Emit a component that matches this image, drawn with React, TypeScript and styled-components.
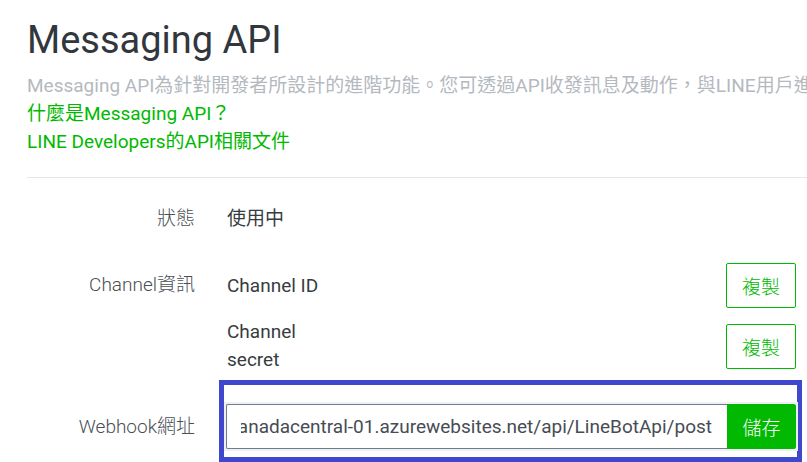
import React from "react";
import styled, { createGlobalStyle } from "styled-components";

const GlobalStyle = createGlobalStyle`
  html, body {
    margin: 0;
    padding: 0;
    background: #ffffff;
    overflow: hidden;
  }
  body {
    font-family: "Roboto", "Noto Sans CJK TC", sans-serif;
  }
`;

const Page = styled.div`
  width: 807px;
  height: 462px;
  overflow: hidden;
  padding-left: 27px;
  box-sizing: border-box;
`;

const Title = styled.h1`
  margin: 17px 0 0;
  font-size: 38px;
  line-height: 46px;
  font-weight: 400;
  color: #32363d;
`;

const Description = styled.p`
  margin: 9px 0 0;
  font-size: 19px;
  line-height: 28px;
  color: #b4b9c0;
  white-space: nowrap;
  overflow: hidden;
`;

const LinkList = styled.div`
  display: flex;
  flex-direction: column;
`;

const GreenLink = styled.a`
  font-size: 19px;
  line-height: 28px;
  color: #00b900;
  text-decoration: none;
  white-space: nowrap;
`;

const Divider = styled.hr`
  margin: 21px 0 0;
  border: none;
  border-top: 1px solid #e6e6e6;
  height: 0;
`;

const Rows = styled.div`
  display: flex;
  flex-direction: column;
  padding-right: 11px;
`;

const Row = styled.div<{ $top: number }>`
  display: grid;
  grid-template-columns: 168px 1fr;
  column-gap: 32px;
  margin-top: ${(p) => p.$top}px;
  align-items: start;
`;

const Label = styled.div<{ $offset?: number }>`
  text-align: right;
  font-size: 19px;
  line-height: 28px;
  font-weight: 300;
  color: #4a4e55;
  padding-top: ${(p) => p.$offset ?? 0}px;
  white-space: nowrap;
`;

const Value = styled.div`
  font-size: 19px;
  line-height: 28px;
  color: #383c42;
`;

const SubList = styled.div`
  display: flex;
  flex-direction: column;
  gap: 10px;
`;

const SubRow = styled.div`
  display: flex;
  align-items: center;
  justify-content: space-between;
  min-height: 45px;
`;

const SubLabel = styled.div`
  width: 100px;
  font-size: 19px;
  line-height: 28px;
  color: #383c42;
`;

const CopyButton = styled.button`
  width: 70px;
  height: 45px;
  border: 1px solid #00b900;
  border-radius: 2px;
  background: #ffffff;
  color: #00b900;
  font-family: "Roboto", "Noto Sans CJK TC", sans-serif;
  font-size: 19px;
  font-weight: 300;
  padding: 0;
  box-sizing: border-box;
  cursor: pointer;
`;

const Highlight = styled.div`
  margin-left: -8px;
  margin-right: -6px;
  border: 5px solid #3f48cc;
  padding: 19px 1px 8px 2px;
  display: flex;
`;

const InputGroup = styled.div`
  display: flex;
  flex: 1;
  box-shadow: 0 0 0 2px #eef0f4;
`;

const UrlInput = styled.input`
  flex: 1;
  min-width: 0;
  height: 45px;
  box-sizing: border-box;
  border: 1px solid #6f7c92;
  border-right: none;
  border-radius: 2px 0 0 2px;
  padding: 0 15px 0 14px;
  font-family: "Roboto", "Noto Sans CJK TC", sans-serif;
  font-size: 19px;
  color: #474c54;
  direction: rtl;
  outline: none;
  background: #ffffff;
`;

const SaveButton = styled.button`
  width: 69px;
  height: 45px;
  border: none;
  border-radius: 0 2px 2px 0;
  background: #00b900;
  color: #ffffff;
  font-family: "Roboto", "Noto Sans CJK TC", sans-serif;
  font-size: 19px;
  font-weight: 300;
  padding: 0;
  cursor: pointer;
`;

export default function App() {
  return (
    <>
      <GlobalStyle />
      <Page>
        <Title>Messaging API</Title>
        <Description>
          Messaging API為針對開發者所設計的進階功能。您可透過API收發訊息及動作，與LINE用戶進行互動。
        </Description>
        <LinkList>
          <GreenLink href="#">什麼是Messaging API？</GreenLink>
          <GreenLink href="#">LINE Developers的API相關文件</GreenLink>
        </LinkList>
        <Divider />
        <Rows>
          <Row $top={27}>
            <Label>狀態</Label>
            <Value>使用中</Value>
          </Row>
          <Row $top={30}>
            <Label $offset={8}>Channel資訊</Label>
            <SubList>
              <SubRow>
                <SubLabel>Channel ID</SubLabel>
                <CopyButton>複製</CopyButton>
              </SubRow>
              <SubRow>
                <SubLabel>Channel secret</SubLabel>
                <CopyButton>複製</CopyButton>
              </SubRow>
            </SubList>
          </Row>
          <Row $top={6}>
            <Label $offset={33}>Webhook網址</Label>
            <Highlight>
              <InputGroup>
                <UrlInput
                  readOnly
                  value="https://linebotcanadacentral-01.azurewebsites.net/api/LineBotApi/post"
                />
                <SaveButton>儲存</SaveButton>
              </InputGroup>
            </Highlight>
          </Row>
        </Rows>
      </Page>
    </>
  );
}
